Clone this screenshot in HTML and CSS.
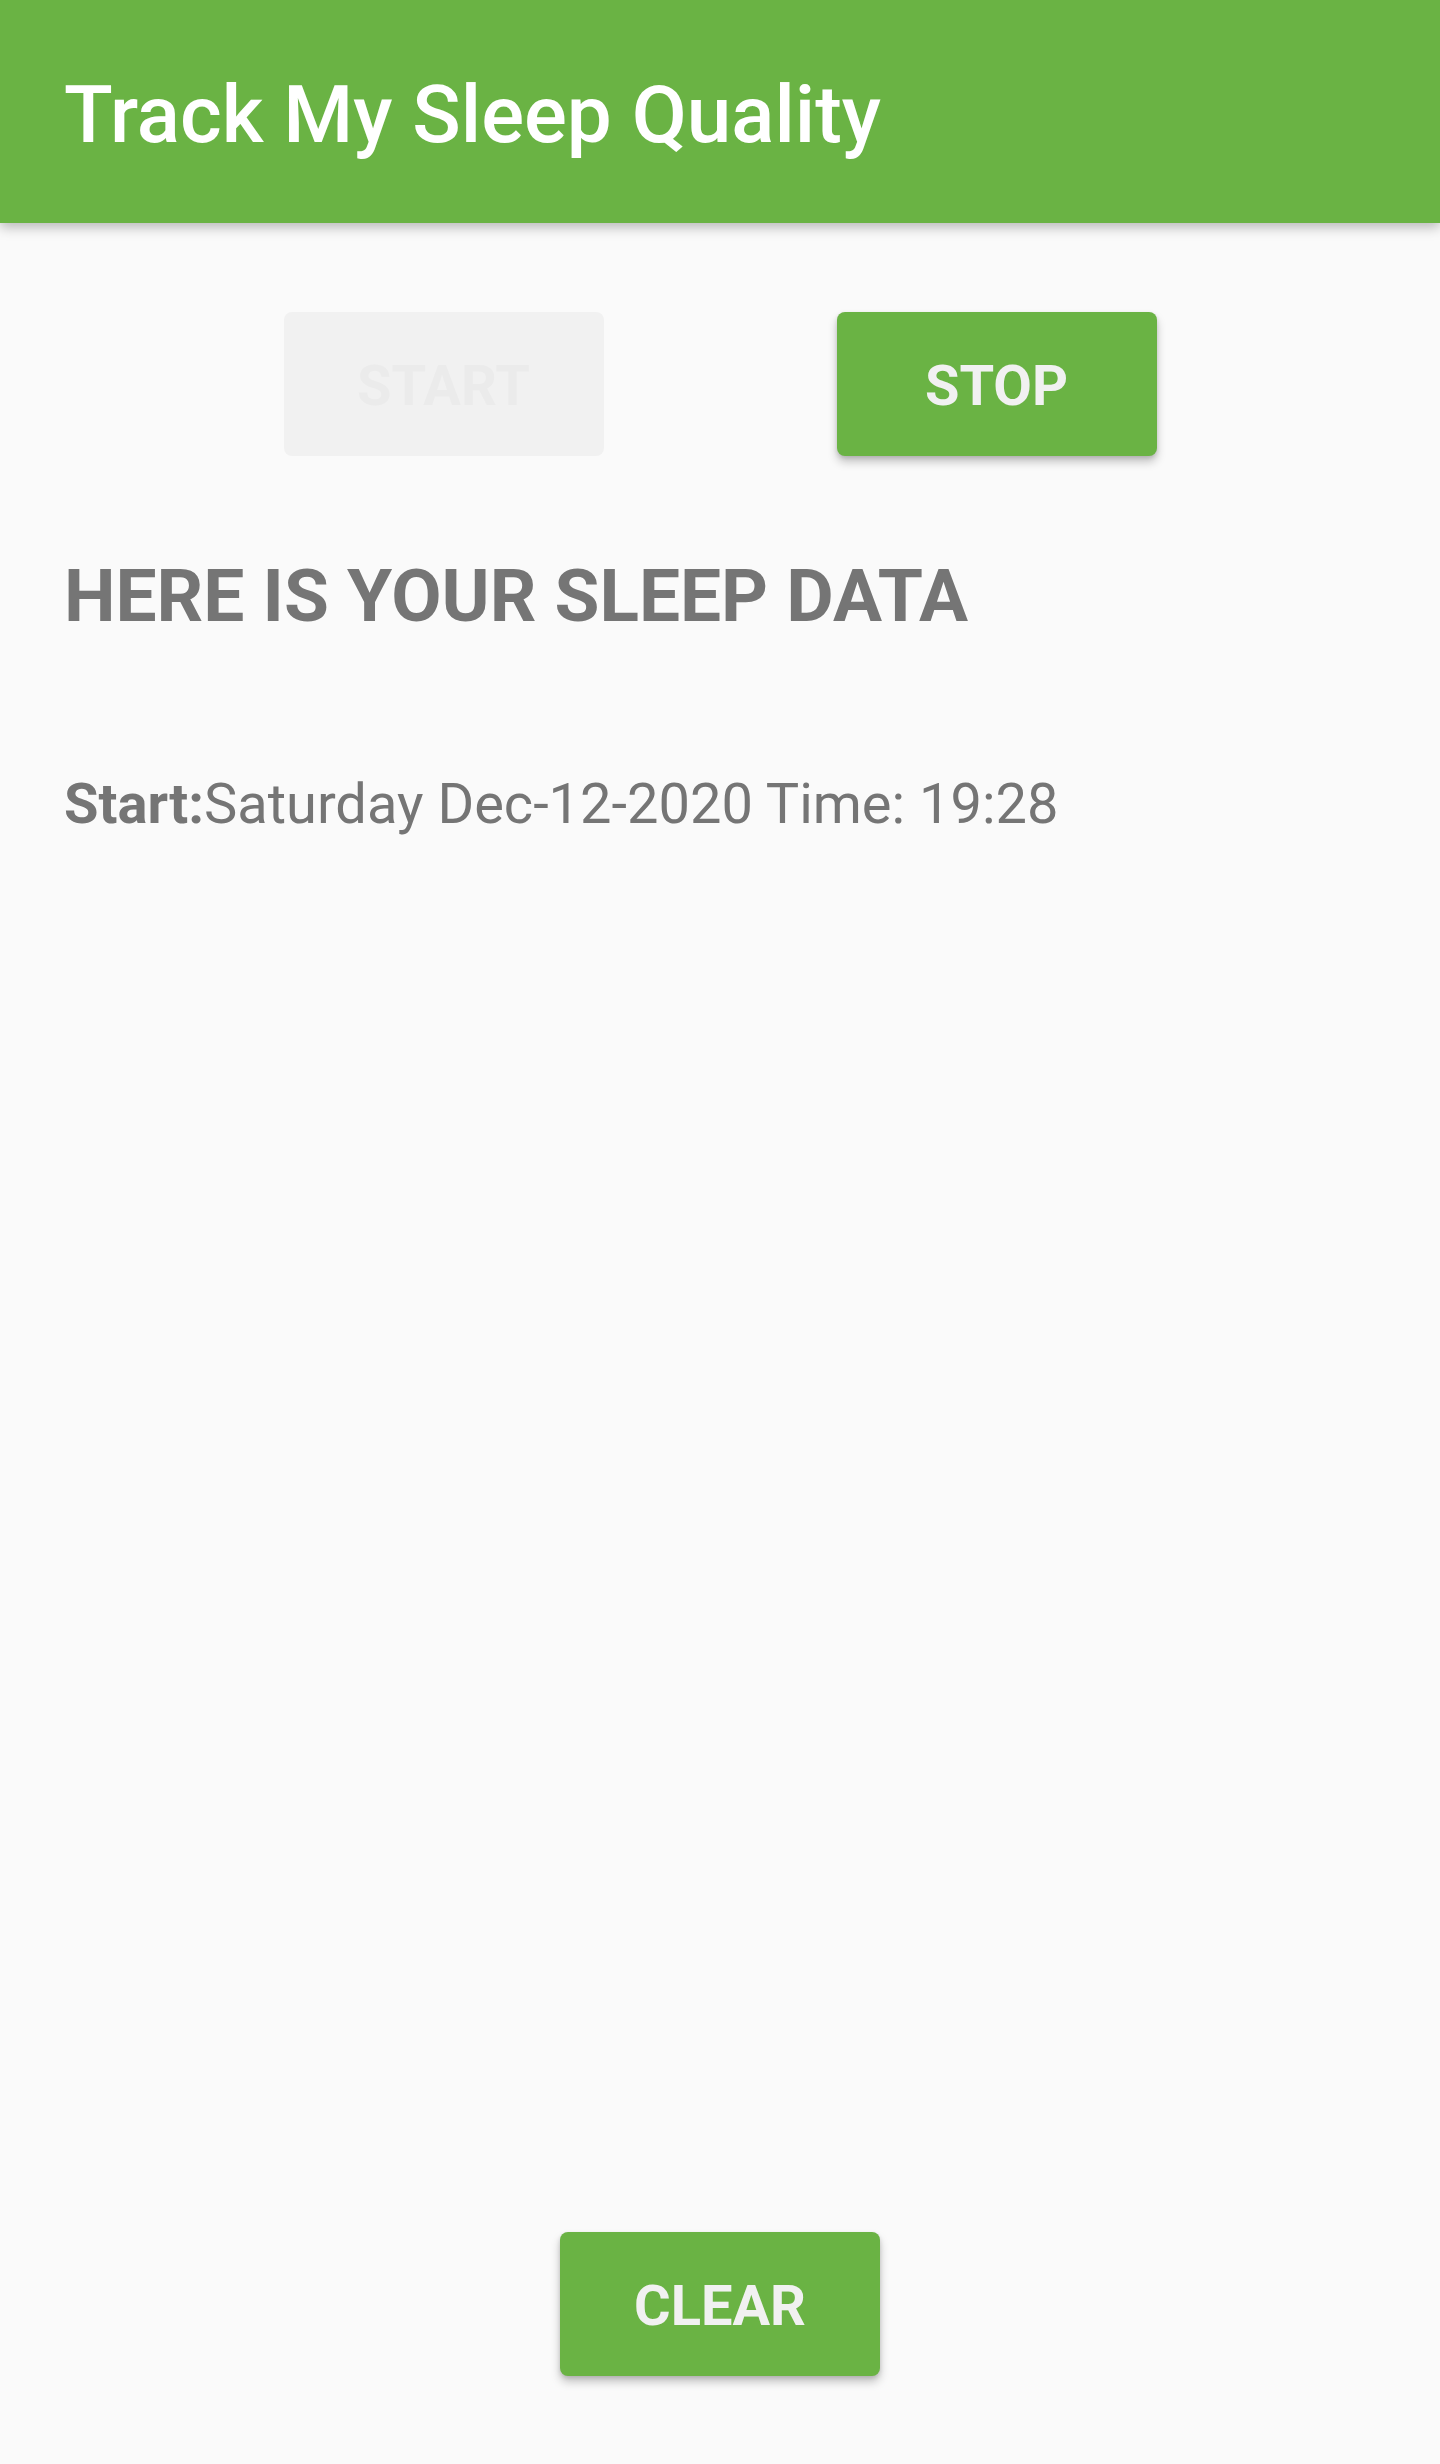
FILE: index.html
```html
<!DOCTYPE html>
<html>
<head>
<meta charset="utf-8">
<link rel="stylesheet" href="styles.css">
</head>
<body>
<div class="screen">
  <header class="appbar">
    <h1 class="title">Track My Sleep Quality</h1>
  </header>
  <main class="content">
    <div class="btn-row">
      <button class="btn btn-disabled">START</button>
      <button class="btn btn-primary">STOP</button>
    </div>
    <h2 class="heading">HERE IS YOUR SLEEP DATA</h2>
    <p class="data"><b>Start:</b>Saturday Dec-12-2020 Time: 19:28</p>
  </main>
  <footer class="bottom">
    <button class="btn btn-primary">CLEAR</button>
  </footer>
</div>
</body>
</html>
```
FILE: styles.css
```css
html, body {
  margin: 0;
  padding: 0;
  background: #fafafa;
}
.screen {
  width: 1440px;
  height: 2464px;
  display: flex;
  flex-direction: column;
  font-family: Roboto, "Noto Sans", sans-serif;
  background: #fafafa;
}
.appbar {
  height: 223px;
  background: #6ab344;
  box-shadow: 0 4px 12px rgba(0,0,0,0.28);
  display: flex;
  align-items: center;
  padding: 0 64px;
  position: relative;
  z-index: 1;
  flex-shrink: 0;
}
.title {
  margin: 0;
  color: #ffffff;
  font-weight: 500;
  font-size: 80px;
  line-height: 1;
  letter-spacing: 0;
  padding-top: 6px;
}
.content {
  flex: 1;
  padding: 0 64px;
}
.btn-row {
  display: flex;
  justify-content: center;
  gap: 233px;
  margin-top: 89px;
}
.btn {
  width: 320px;
  height: 144px;
  border: none;
  border-radius: 8px;
  font-family: Roboto, "Noto Sans", sans-serif;
  font-weight: 700;
  font-size: 56px;
  letter-spacing: 0;
  padding: 4px 0 0 0;
}
.btn-disabled {
  background: #f1f1f1;
  color: #ebebeb;
}
.btn-primary {
  background: #6ab344;
  color: #f1f1f1;
  box-shadow: 0 6px 10px rgba(0,0,0,0.22), 0 2px 4px rgba(0,0,0,0.12);
}
.heading {
  margin: 104px 0 0 0;
  font-size: 73px;
  font-weight: 700;
  color: #757575;
  line-height: 1;
}
.data {
  margin: 143px 0 0 0;
  font-size: 56px;
  color: #757575;
  line-height: 1;
}
.data b {
  font-weight: 700;
}
.bottom {
  display: flex;
  justify-content: center;
  padding-bottom: 88px;
}
```
